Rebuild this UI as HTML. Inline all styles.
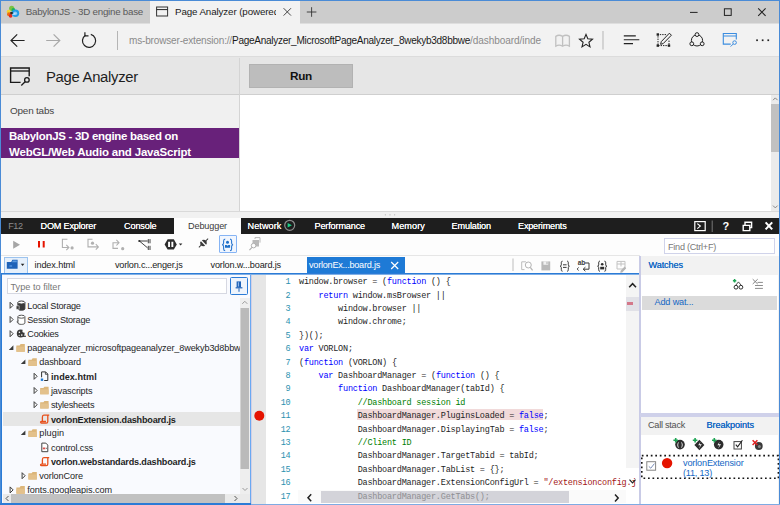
<!DOCTYPE html>
<html><head><meta charset="utf-8"><title>Page Analyzer</title>
<style>
html,body{margin:0;padding:0}
body{width:780px;height:505px;overflow:hidden;position:relative;background:#f2f2f2;font-family:"Liberation Sans",sans-serif;color:#000}
.a{position:absolute;white-space:nowrap}
.t{position:absolute;white-space:pre;line-height:1.15}
svg{position:absolute;overflow:visible}
.hl{background:none}
/* browser chrome */
#tabstrip{left:0;top:0;width:780px;height:23px;background:#cccccc;border-bottom:1px solid #dedede}
#acttab{left:150px;top:1px;width:149.500px;height:24px;background:#f2f2f2}
#navbar{left:0;top:24px;width:780px;height:33px;background:#f2f2f2}
#navline{left:0;top:56.400px;width:780px;height:1px;background:#dcdcdc}
#winl{left:0;top:0;width:1px;height:505px;background:#4a8bd6}
#wint{left:0;top:0;width:780px;height:1px;background:#4a8bd6}
#winr{left:779px;top:0;width:1px;height:505px;background:#4a8bd6}
#winb{left:0;top:504px;width:780px;height:1px;background:#7eabe3}
#lpb{left:0;top:503px;width:251px;height:2px;background:#2b7bd6}
/* page */
#page{left:1px;top:58px;width:778px;height:154px;background:#fff}
#phead{left:1px;top:57.400px;width:778px;height:36.600px;background:#e6e6e6}
#pheadline{left:1px;top:94px;width:778px;height:1px;background:#cfcfcf}
#side{left:1px;top:95px;width:238px;height:116px;background:#f0f0f0}
#sideline{left:239px;top:58px;width:1px;height:153px;background:#d4d4d4}
#run{left:249px;top:64px;width:104px;height:24px;background:#bdbdbd;box-sizing:border-box;border:1px solid #b2b2b2}
#purple{left:1px;top:127.700px;width:238px;height:30.500px;background:#68217a}
#pscroll{left:770.500px;top:94.500px;width:8.500px;height:117px;background:#ebebeb}
#pthumb{left:770.500px;top:103.800px;width:8.500px;height:47.800px;background:#c1c1c1}
#pbot{left:1px;top:211px;width:778px;height:1px;background:#d9d9d9}
/* devtools */
#splitter{left:1px;top:212px;width:778px;height:6px;background:#f1f1f1}
#f12bar{left:1px;top:217.700px;width:778px;height:16.300px;background:#1e1e1e}
#dbgtab{left:174px;top:218px;width:67px;height:17px;background:#fdfdfd}
#dtool{left:1px;top:234px;width:778px;height:22px;background:#fdfdfd}
#ftabs{left:1px;top:256px;width:639px;height:18px;background:#fdfdfd}
#ftline{left:1px;top:255px;width:639px;height:1px;background:#e6e6e6}
#facttab{left:307px;top:257px;width:98px;height:17px;background:#1e7ad6}
#fblue{left:1px;top:273px;width:638px;height:1px;background:#2b7bd6;border-bottom:1px solid #7fafe6}
#leftp{left:1px;top:275px;width:250px;height:229px;background:#f9fafe}
#code{left:251px;top:275px;width:389px;height:229px;background:#fff}
#gut{left:251px;top:275px;width:15px;height:229px;background:#e6e6e6}
#rightp{left:641px;top:256px;width:137px;height:248px;background:#fff}
#rsep{left:639.200px;top:256px;width:1.900px;height:248px;background:#c9cbe6}
#whead{left:641px;top:256px;width:138px;height:19px;background:#f2f2f2}
#addw{left:642.300px;top:296px;width:134.700px;height:13.600px;background:#dbdbdb}
#rsplit{left:640px;top:413px;width:139px;height:4px;background:#cfd1ea}
#chead{left:641px;top:417px;width:138px;height:18px;background:#f2f2f2}
#selrow{left:3px;top:412px;width:237px;height:14px;background:#e6e6e6}
#filter{left:7px;top:278px;width:220px;height:16px;box-sizing:border-box;border:1px solid #d6d8e2;background:#fff}
#pin{left:230px;top:277px;width:18px;height:18px;box-sizing:border-box;border:1px solid #2b7bd6;border-radius:1.500px;background:#eef4fc}
#find{left:664px;top:238px;width:111px;height:16px;box-sizing:border-box;border:1px solid #d0d3ea;background:#fff}
#fbtn{left:4px;top:257px;width:24px;height:17px;box-sizing:border-box;border:1px solid #9cc3ee;background:#e6f0fb}
#pbtn{left:219px;top:235px;width:18px;height:18px;box-sizing:border-box;border:1px solid #86b4f4;border-radius:1px;background:#f1f6fe}
#lpl{left:1px;top:274px;width:1.4px;height:230px;background:#2b7bd6}
#lpr{left:250px;top:275px;width:1px;height:229px;background:#6aa9f2;border-right:1px solid #d3d0e4}
#bpbox{left:0;top:0}
</style></head><body>
<div class="a" id="tabstrip"></div>
<div class="a" id="acttab"></div>
<div class="a" id="navbar"></div>
<div class="a" id="navline"></div>
<div class="a" id="page"></div>
<div class="a" id="phead"></div>
<div class="a" id="pheadline"></div>
<div class="a" id="side"></div>
<div class="a" id="sideline"></div>
<div class="a" id="run"></div>
<div class="a" id="purple"></div>
<div class="a" id="pscroll"></div>
<div class="a" id="pthumb"></div>
<div class="a" id="pbot"></div>
<div class="a" id="splitter"></div>
<div class="a" id="f12bar"></div>
<div class="a" id="dbgtab"></div>
<div class="a" id="dtool"></div>
<div class="a" id="ftabs"></div>
<div class="a" id="ftline"></div>
<div class="a" id="facttab"></div>
<div class="a" id="leftp"></div>
<div class="a" id="code"></div>
<div class="a" id="gut"></div>
<div class="a" id="rightp"></div>
<div class="a" id="whead"></div>
<div class="a" id="addw"></div>
<div class="a" id="chead"></div>
<div class="a" id="selrow"></div>
<div class="a" id="filter"></div>
<div class="a" id="pin"></div>
<div class="a" id="find"></div>
<div class="a" id="fbtn"></div>
<div class="a" id="pbtn"></div>
<svg id="bpbox" width="780" height="505" fill="none"><rect x="641.800" y="455.600" width="136.600" height="22.700" stroke="#151515" stroke-width="1.600" stroke-dasharray="1.700 2.800"/></svg>
<div class="a" id="codewrap" style="left:0;top:0;width:641px;height:505px;overflow:hidden;font-family:'Liberation Mono',monospace;font-size:8.5px;letter-spacing:-0.213px;color:#1e1e1e">
<div class="a" style="left:357.400px;top:409.300px;width:186.100px;height:10.700px;background:#f1dada"></div>
<div class="t ln" style="left:285.6px;top:278.1px;color:#2b91af">1</div>
<div class="t cl" style="left:299.0px;top:278.1px">window.browser = (<span style="color:#0000ff">function</span> () {</div>
<div class="t ln" style="left:285.6px;top:291.5px;color:#2b91af">2</div>
<div class="t cl" style="left:299.0px;top:291.5px">    <span style="color:#0000ff">return</span> window.msBrowser ||</div>
<div class="t ln" style="left:285.6px;top:304.9px;color:#2b91af">3</div>
<div class="t cl" style="left:299.0px;top:304.9px">        window.browser ||</div>
<div class="t ln" style="left:285.6px;top:318.3px;color:#2b91af">4</div>
<div class="t cl" style="left:299.0px;top:318.3px">        window.chrome;</div>
<div class="t ln" style="left:285.6px;top:331.7px;color:#2b91af">5</div>
<div class="t cl" style="left:299.0px;top:331.7px">})();</div>
<div class="t ln" style="left:285.6px;top:345.1px;color:#2b91af">6</div>
<div class="t cl" style="left:299.0px;top:345.1px"><span style="color:#0000ff">var</span> VORLON;</div>
<div class="t ln" style="left:285.6px;top:358.5px;color:#2b91af">7</div>
<div class="t cl" style="left:299.0px;top:358.5px">(<span style="color:#0000ff">function</span> (VORLON) {</div>
<div class="t ln" style="left:285.6px;top:371.9px;color:#2b91af">8</div>
<div class="t cl" style="left:299.0px;top:371.9px">    <span style="color:#0000ff">var</span> DashboardManager = (<span style="color:#0000ff">function</span> () {</div>
<div class="t ln" style="left:285.6px;top:385.3px;color:#2b91af">9</div>
<div class="t cl" style="left:299.0px;top:385.3px">        <span style="color:#0000ff">function</span> DashboardManager(tabId) {</div>
<div class="t ln" style="left:280.7px;top:398.7px;color:#2b91af">10</div>
<div class="t cl" style="left:299.0px;top:398.7px">            <span style="color:#008000">//Dashboard session id</span></div>
<div class="t ln" style="left:280.7px;top:412.1px;color:#2b91af">11</div>
<div class="t cl" style="left:299.0px;top:412.1px">            <span class="hl">DashboardManager.PluginsLoaded = </span><span class="hl" style="color:#0000ff">false</span>;</div>
<div class="t ln" style="left:280.7px;top:425.5px;color:#2b91af">12</div>
<div class="t cl" style="left:299.0px;top:425.5px">            DashboardManager.DisplayingTab = <span style="color:#0000ff">false</span>;</div>
<div class="t ln" style="left:280.7px;top:438.9px;color:#2b91af">13</div>
<div class="t cl" style="left:299.0px;top:438.9px">            <span style="color:#008000">//Client ID</span></div>
<div class="t ln" style="left:280.7px;top:452.3px;color:#2b91af">14</div>
<div class="t cl" style="left:299.0px;top:452.3px">            DashboardManager.TargetTabid = tabId;</div>
<div class="t ln" style="left:280.7px;top:465.7px;color:#2b91af">15</div>
<div class="t cl" style="left:299.0px;top:465.7px">            DashboardManager.TabList = {};</div>
<div class="t ln" style="left:280.7px;top:479.1px;color:#2b91af">16</div>
<div class="t cl" style="left:299.0px;top:479.1px">            DashboardManager.ExtensionConfigUrl = <span style="color:#a31515">"/extensionconfig.j</span></div>
<div class="t ln" style="left:280.7px;top:492.5px;color:#2b91af">17</div>
</div>
<div class="t" style="left:25.7px;top:6.4px;font-size:9.77px;font-weight:400;color:#5a5a5a;letter-spacing:-0.249px;">BabylonJS - 3D engine base</div>
<div class="t" style="left:175.0px;top:6.4px;font-size:9.77px;font-weight:400;color:#1a1a1a;letter-spacing:-0.109px;width:100.5px;overflow:hidden;">Page Analyzer (powered</div>
<div class="t" style="left:129.0px;top:35.2px;font-size:10.04px;font-weight:400;color:#8a8a8a;letter-spacing:-0.176px;">ms-browser-extension://</div>
<div class="t" style="left:232.0px;top:35.2px;font-size:10.04px;font-weight:400;color:#1a1a1a;letter-spacing:-0.281px;">PageAnalyzer_MicrosoftPageAnalyzer_8wekyb3d8bbwe</div>
<div class="t" style="left:470.0px;top:35.2px;font-size:10.04px;font-weight:400;color:#8a8a8a;letter-spacing:-0.064px;">/dashboard/inde</div>
<div class="t" style="left:46.0px;top:69.1px;font-size:14.84px;font-weight:400;color:#1e1e1e;letter-spacing:-0.279px;">Page Analyzer</div>
<div class="t" style="left:290.0px;top:69.2px;font-size:11.77px;font-weight:700;color:#111;letter-spacing:-0.292px;">Run</div>
<div class="t" style="left:10.0px;top:105.3px;font-size:9.92px;font-weight:400;color:#444;letter-spacing:-0.191px;">Open tabs</div>
<div class="t" style="left:9.0px;top:129.9px;font-size:11.47px;font-weight:700;color:#fff;letter-spacing:-0.294px;">BabylonJS - 3D engine based on</div>
<div class="t" style="left:9.0px;top:146.0px;font-size:11.47px;font-weight:700;color:#fff;letter-spacing:-0.171px;">WebGL/Web Audio and JavaScript</div>
<div class="t" style="left:8.2px;top:220.7px;font-size:9.14px;font-weight:400;color:#8c8c8c;letter-spacing:-0.445px;">F12</div>
<div class="t" style="left:40.5px;top:220.7px;font-size:9.14px;font-weight:400;color:#fff;letter-spacing:-0.193px;text-shadow:0 0 0.4px #fff;">DOM Explorer</div>
<div class="t" style="left:124.0px;top:220.7px;font-size:9.14px;font-weight:400;color:#fff;letter-spacing:-0.141px;text-shadow:0 0 0.4px #fff;">Console</div>
<div class="t" style="left:188.0px;top:220.7px;font-size:9.14px;font-weight:400;color:#3a3a3a;letter-spacing:-0.135px;">Debugger</div>
<div class="t" style="left:247.5px;top:220.7px;font-size:9.14px;font-weight:400;color:#fff;letter-spacing:0.076px;text-shadow:0 0 0.4px #fff;">Network</div>
<div class="t" style="left:314.5px;top:220.7px;font-size:9.14px;font-weight:400;color:#fff;letter-spacing:-0.159px;text-shadow:0 0 0.4px #fff;">Performance</div>
<div class="t" style="left:391.5px;top:220.7px;font-size:9.14px;font-weight:400;color:#fff;letter-spacing:0.089px;text-shadow:0 0 0.4px #fff;">Memory</div>
<div class="t" style="left:451.5px;top:220.7px;font-size:9.14px;font-weight:400;color:#fff;letter-spacing:-0.120px;text-shadow:0 0 0.4px #fff;">Emulation</div>
<div class="t" style="left:518.0px;top:220.7px;font-size:9.14px;font-weight:400;color:#fff;letter-spacing:-0.202px;text-shadow:0 0 0.4px #fff;">Experiments</div>
<div class="t" style="left:34.5px;top:260.2px;font-size:9.14px;font-weight:400;color:#222;letter-spacing:-0.109px;">index.html</div>
<div class="t" style="left:115.0px;top:260.2px;font-size:9.14px;font-weight:400;color:#222;letter-spacing:-0.211px;">vorlon.c...enger.js</div>
<div class="t" style="left:210.5px;top:260.2px;font-size:9.14px;font-weight:400;color:#222;letter-spacing:-0.160px;">vorlon.w...board.js</div>
<div class="t" style="left:309.0px;top:260.2px;font-size:9.14px;font-weight:400;color:#fff;letter-spacing:-0.241px;">vorlonEx...board.js</div>
<div class="t" style="left:10.5px;top:281.7px;font-size:9.14px;font-weight:400;color:#777;letter-spacing:0.021px;">Type to filter</div>
<div class="t" style="left:668.0px;top:241.7px;font-size:9.14px;font-weight:400;color:#777;letter-spacing:-0.267px;">Find (Ctrl+F)</div>
<div class="t" style="left:648.5px;top:260.2px;font-size:9.14px;font-weight:400;color:#1467c4;letter-spacing:-0.096px;text-shadow:0 0 0.4px #1467c4;">Watches</div>
<div class="t" style="left:654.5px;top:296.7px;font-size:9.14px;font-weight:400;color:#1467c4;letter-spacing:-0.158px;">Add wat...</div>
<div class="t" style="left:648.0px;top:419.7px;font-size:9.14px;font-weight:400;color:#505050;letter-spacing:-0.256px;">Call stack</div>
<div class="t" style="left:706.5px;top:419.7px;font-size:9.14px;font-weight:400;color:#1467c4;letter-spacing:-0.062px;text-shadow:0 0 0.4px #1467c4;">Breakpoints</div>
<div class="t" style="left:683.0px;top:457.7px;font-size:9.14px;font-weight:400;color:#1467c4;letter-spacing:-0.159px;">vorlonExtensior</div>
<div class="t" style="left:683.0px;top:468.2px;font-size:9.14px;font-weight:400;color:#1467c4;letter-spacing:-0.223px;">(11, 13)</div>
<div class="t" style="left:27.3px;top:300.5px;font-size:9.14px;font-weight:400;color:#1e1e1e;letter-spacing:-0.224px;">Local Storage</div>
<div class="t" style="left:27.3px;top:314.7px;font-size:9.14px;font-weight:400;color:#1e1e1e;letter-spacing:-0.285px;">Session Storage</div>
<div class="t" style="left:27.3px;top:328.9px;font-size:9.14px;font-weight:400;color:#1e1e1e;letter-spacing:-0.224px;">Cookies</div>
<div class="t" style="left:27.3px;top:343.1px;font-size:9.14px;font-weight:400;color:#1e1e1e;letter-spacing:-0.136px;">pageanalyzer_microsoftpageanalyzer_8wekyb3d8bbwe</div>
<div class="t" style="left:39.3px;top:357.3px;font-size:9.14px;font-weight:400;color:#1e1e1e;letter-spacing:-0.160px;">dashboard</div>
<div class="t" style="left:51.0px;top:372.0px;font-size:9.09px;font-weight:700;color:#1e1e1e;letter-spacing:0.029px;">index.html</div>
<div class="t" style="left:51.0px;top:385.7px;font-size:9.14px;font-weight:400;color:#1e1e1e;letter-spacing:-0.164px;">javascripts</div>
<div class="t" style="left:51.0px;top:399.9px;font-size:9.14px;font-weight:400;color:#1e1e1e;letter-spacing:-0.214px;">stylesheets</div>
<div class="t" style="left:51.0px;top:414.6px;font-size:9.09px;font-weight:700;color:#1e1e1e;letter-spacing:-0.195px;">vorlonExtension.dashboard.js</div>
<div class="t" style="left:39.3px;top:428.3px;font-size:9.14px;font-weight:400;color:#1e1e1e;letter-spacing:0.107px;">plugin</div>
<div class="t" style="left:51.0px;top:442.5px;font-size:9.14px;font-weight:400;color:#1e1e1e;letter-spacing:-0.148px;">control.css</div>
<div class="t" style="left:51.0px;top:457.2px;font-size:9.09px;font-weight:700;color:#1e1e1e;letter-spacing:-0.176px;">vorlon.webstandards.dashboard.js</div>
<div class="t" style="left:39.3px;top:470.9px;font-size:9.14px;font-weight:400;color:#1e1e1e;letter-spacing:-0.094px;">vorlonCore</div>
<div class="t" style="left:27.3px;top:485.1px;font-size:9.14px;font-weight:400;color:#1e1e1e;letter-spacing:-0.077px;">fonts.googleapis.com</div>
<!-- left panel vertical scrollbar -->
<div class="a" style="left:240px;top:298px;width:10px;height:196px;background:#eeeeee"></div>
<div class="a" style="left:240px;top:308px;width:8px;height:160.500px;background:#bababa;border-left:1px solid #d4d4d4"></div>
<svg style="left:240px;top:296px" width="10" height="195"><path d="M2.300 7.800 L4.800 5.300 L7.300 7.800" fill="none" stroke="#9a9a9a" stroke-width="1"/><path d="M2.500 192 L5 194.500 L7.500 192" fill="none" stroke="#9a9a9a" stroke-width="1"/></svg>
<!-- left panel horizontal scrollbar -->
<div class="a" style="left:3px;top:494px;width:247px;height:10px;background:#eaeaea"></div>
<div class="a" style="left:11px;top:494.300px;width:214px;height:8.300px;background:#c1c1c1"></div>
<svg style="left:3px;top:492px" width="247" height="12"><path d="M5.500 4 L3 6.500 L5.500 9" fill="none" stroke="#555" stroke-width="1"/><path d="M231.500 4 L234 6.500 L231.500 9" fill="none" stroke="#555" stroke-width="1"/></svg>
<!-- code vertical scrollbar -->
<div class="a" style="left:626.200px;top:275px;width:12.800px;height:193.300px;background:#f4f4f4"></div>
<div class="a" style="left:626.200px;top:297.200px;width:12.800px;height:14px;background:#e1e1e7"></div>
<div class="a" style="left:627.200px;top:301.500px;width:5.600px;height:3.900px;background:#d4788a"></div>
<svg style="left:626px;top:275px" width="13" height="230"><path d="M3.200 12.300 L6.600 8.700 L10 12.300" fill="none" stroke="#222" stroke-width="1.500"/><path d="M3.500 204.600 L6.500 207.800 L9.500 204.600" fill="none" stroke="#222" stroke-width="1.200"/></svg>
<!-- code horizontal scrollbar -->
<div class="a" style="left:298px;top:490px;width:328px;height:13px;background:#fafafa"></div>
<div class="a" style="left:321px;top:491px;width:248px;height:12px;background:#d3d3d9"></div>
<svg style="left:298px;top:490px" width="328" height="13"><path d="M13.200 4.300 L10 7.800 L13.200 11.300" fill="none" stroke="#222" stroke-width="1.500"/><path d="M317 4.400 L320.200 7.900 L317 11.400" fill="none" stroke="#222" stroke-width="1.500"/></svg>
<!-- page scrollbar arrows -->
<svg style="left:770.500px;top:95px" width="9" height="116"><path d="M2 5.200 L4.300 2.900 L6.600 5.200" fill="none" stroke="#888" stroke-width="1"/><path d="M2 110.600 L4.300 112.900 L6.600 110.600" fill="none" stroke="#888" stroke-width="1"/></svg>

<div class="t cl" style="left:299.0px;top:492.5px;font-family:'Liberation Mono',monospace;font-size:8.5px;letter-spacing:-0.213px;color:#8e8e92">            DashboardManager.GetTabs();</div>
<div class="a" id="fblue"></div>
<div class="a" id="rsep"></div>
<div class="a" id="rsplit"></div>
<div class="a" id="lpl"></div>
<div class="a" id="lpr"></div>
<!-- ===== browser chrome icons ===== -->
<svg style="left:0;top:0" width="780" height="58" fill="none">
 <!-- favicon -->
 <circle cx="11.700" cy="8.300" r="2.600" fill="#7cc243"/>
 <circle cx="8.600" cy="11.700" r="1.900" fill="#f2d32c"/>
 <circle cx="9" cy="14.300" r="2" fill="#f06a10"/>
 <circle cx="10.600" cy="15.900" r="1.800" fill="#e62a1e"/>
 <circle cx="13.400" cy="9.900" r="1.900" fill="#19b35a"/>
 <circle cx="15.500" cy="13.300" r="3.700" fill="#1e9ce8"/>
 <circle cx="15.200" cy="13.300" r="1.900" fill="#8ecbf8"/>
 <circle cx="11.500" cy="13.100" r="1.400" fill="#262626"/>
 <path d="M12.400 14.400c1.200.6 2.400-.2 2.800-1.400" stroke="#e8f2fc" stroke-width=".8"/>
 <!-- tab 2 page icon -->
 <rect x="156.600" y="7" width="11" height="9" stroke="#333" stroke-width="1"/>
 <path d="M156.6 9.6h11" stroke="#222" stroke-width="1"/>
 <!-- tab close, plus -->
 <path d="M283.600 8.200l7.400 7.400M291 8.200l-7.400 7.400" stroke="#333" stroke-width=".9"/>
 <path d="M306.800 12h9.600M311.600 7.200v9.600" stroke="#333" stroke-width=".9"/>
 <!-- window controls -->
 <path d="M690 12.4h7.6" stroke="#222" stroke-width="1"/>
 <rect x="724.4" y="8.8" width="6.8" height="6.6" stroke="#222" stroke-width="1"/>
 <path d="M758.2 8.4l7.4 7.4M765.6 8.4l-7.4 7.4" stroke="#222" stroke-width="1.1"/>
 <!-- back / forward / refresh -->
 <path d="M24.6 40.5H11M17.2 34.3L11 40.5l6.2 6.2" stroke="#222" stroke-width="1.2"/>
 <path d="M46.2 40.5h13.6M53.6 34.3l6.2 6.2-6.2 6.2" stroke="#a8a8a8" stroke-width="1.2"/>
 <path d="M85.500 35.200A6.600 6.600 0 1 0 90.800 34.400" stroke="#222" stroke-width="1.200"/>
 <path d="M84.900 32.200v3.600h3.600" stroke="#222" stroke-width="1.200"/>
 <path d="M117.5 31v19" stroke="#b5b5b5" stroke-width="1"/>
 <!-- reading view book -->
 <path d="M562.600 36.400c-2-1.300-5-1.300-6.800 0v9.800c1.800-1.100 4.800-1.100 6.800 0c2-1.100 5-1.100 6.800 0v-9.800c-1.800-1.300-4.800-1.300-6.800 0zM562.600 36.400v9.800" stroke="#c0c0c0" stroke-width="1.300"/>
 <!-- star -->
 <path d="M586 34.400l1.800 4.400 4.700.4-3.600 3.100 1.100 4.600-4-2.500-4 2.500 1.100-4.600-3.600-3.100 4.700-.4z" stroke="#222" stroke-width="1.100" stroke-linejoin="miter"/>
 <path d="M603 31v18.5" stroke="#b5b5b5" stroke-width="1"/>
 <!-- hub -->
 <path d="M623.800 35.900h12M623.800 39.800h15.500M623.800 43.600h9.200" stroke="#222" stroke-width="1.100"/>
 <!-- web note -->
 <path d="M666 34.6h-8v11h11v-6" stroke="#222" stroke-width="1" stroke-dasharray="1.4 1"/>
 <rect x="656.6" y="33.3" width="2.4" height="2.4" fill="#222"/><rect x="656.6" y="44.4" width="2.4" height="2.4" fill="#222"/><rect x="667.8" y="44.4" width="2.4" height="2.4" fill="#222"/>
 <path d="M669.4 33.2l2 2-8.2 8.4-2.6.7.7-2.7z" stroke="#222" stroke-width="1"/>
 <!-- share -->
 <circle cx="697" cy="40.4" r="5.6" stroke="#222" stroke-width="1"/>
 <circle cx="697" cy="34.6" r="1.9" fill="#f2f2f2" stroke="#222" stroke-width="1"/>
 <circle cx="691.8" cy="43.8" r="1.9" fill="#f2f2f2" stroke="#222" stroke-width="1"/>
 <circle cx="702.2" cy="43.8" r="1.9" fill="#f2f2f2" stroke="#222" stroke-width="1"/>
 <!-- page analyzer (blue) -->
 <path d="M736.3 39.5v-6h-13v10.6h7.4" stroke="#3b8de0" stroke-width="1.1"/>
 <path d="M723.3 36h13" stroke="#3b8de0" stroke-width="1"/>
 <circle cx="734.6" cy="42.6" r="1.8" stroke="#3b8de0" stroke-width="1"/>
 <path d="M733.2 44l-2.6 2.6" stroke="#3b8de0" stroke-width="1"/>
 <!-- dots -->
 <rect x="756.2" y="39.4" width="1.7" height="1.7" fill="#222"/><rect x="761.8" y="39.4" width="1.7" height="1.7" fill="#222"/><rect x="767.4" y="39.4" width="1.7" height="1.7" fill="#222"/>
</svg>
<!-- page analyzer header icon -->
<svg style="left:0;top:58px" width="60" height="36" fill="none">
 <path d="M29.2 18.2V10H10.6v14.4h10" stroke="#1a1a1a" stroke-width="1.4"/>
 <path d="M10.6 13h18.6" stroke="#1a1a1a" stroke-width="1.3"/>
 <circle cx="26.9" cy="21.9" r="2.3" stroke="#1a1a1a" stroke-width="1.3"/>
 <path d="M25.1 23.7l-3.8 3.8" stroke="#1a1a1a" stroke-width="1.3"/>
</svg>
<!-- splitter grip --><svg style="left:383px;top:213px" width="14" height="4"><rect x="1.800" y="1.200" width="1.200" height="1.200" fill="#c4c4c4"/><rect x="6.400" y="1.200" width="1.200" height="1.200" fill="#c4c4c4"/><rect x="11" y="1.200" width="1.200" height="1.200" fill="#c4c4c4"/></svg>
<!-- ===== F12 bar icons ===== -->
<svg style="left:0;top:218px" width="780" height="16" fill="none">
 <circle cx="289.700" cy="7.300" r="5" stroke="#8e8e8e" stroke-width="1.200"/>
 <path d="M287.600 5.100l4.300 2.200-4.300 2.200z" fill="#1fce86"/>
 <rect x="694.8" y="3.6" width="10.4" height="9" stroke="#fff" stroke-width="1.2"/>
 <path d="M697.3 5.6l3 2.5-3 2.5" stroke="#fff" stroke-width="1.2"/>
 <path d="M712.2 2.5v11.5" stroke="#777" stroke-width="1"/>
 <path d="M743.2 7.4v5.2h6.6V7.4zM745 7.2V4.2h6.6v5.4h-1.6" stroke="#fff" stroke-width="1.4"/>
 <path d="M765.6 4.4l6.6 7M772.2 4.4l-6.6 7" stroke="#fff" stroke-width="2.1"/>
</svg>
<div class="t" style="left:722.6px;top:220.2px;font-size:11px;font-weight:700;color:#fff">?</div>
<!-- ===== debugger toolbar ===== -->
<svg style="left:0;top:234px" width="300" height="22" fill="none">
 <path d="M13.2 6.8v8l6.8-4z" fill="#a6a6a6"/>
 <path d="M38 7h2v6.4h-2zM42.7 7h2v6.4h-2z" fill="#e51400"/>
 <!-- step into -->
 <path d="M67.400 5.200h-5v8.300h6M66.300 10.800l2.600 2.700-2.600 2.700" stroke="#b0b0b0" stroke-width="1.100"/>
 <circle cx="72.100" cy="13.900" r="1.600" fill="#b0b0b0"/>
 <!-- step over -->
 <path d="M92.500 5.200h-4.500v7.700h10M95.800 10.100l2.600 2.800-2.600 2.800" stroke="#b0b0b0" stroke-width="1.100"/>
 <circle cx="92.500" cy="9.200" r="1.600" fill="#b0b0b0"/>
 <!-- step out -->
 <path d="M118 14.400h-5V8.700h5.600M116.400 5.900l2.600 2.800-2.600 2.800" stroke="#b0b0b0" stroke-width="1.100"/>
 <circle cx="122.700" cy="14.700" r="1.600" fill="#b0b0b0"/>
 <!-- worker -->
 <path d="M139.300 7h8.400M139.600 7.200l8 6.700" stroke="#2d2d2d" stroke-width=".9"/>
 <circle cx="139.300" cy="7" r="1.100" fill="#2d2d2d"/>
 <path d="M148.300 5.100v4.200M150 5.100v4.200M148.300 11.800v4.200M150 11.800v4.200" stroke="#2d2d2d" stroke-width=".9"/>
 <!-- exceptions -->
 <path d="M167.6 5.2h6.2l3 5.2-3 5.2h-6.2l-3-5.2z" fill="#2d2d2d"/>
 <path d="M168.100 7.700h1.900v5.400h-1.900zM171.400 7.700h1.900v5.400h-1.900z" fill="#fff"/>
 <path d="M178.8 9.4h3.6l-1.8 2z" fill="#2d2d2d"/>
 <!-- plug -->
 <g transform="translate(203.500 9) rotate(-43) scale(.88)">
  <path d="M-7.200 0h3.600M3.600 0h3.600" stroke="#3a3a3a" stroke-width="1.100"/>
  <path d="M-.7-3.500v7l-1.500-.4-1.600-2v-2.200l1.600-2z" fill="#3a3a3a"/>
  <path d="M.7-3.500v7l1.500-.4 1.600-2v-2.200l-1.600-2z" fill="#3a3a3a"/>
 </g>
 <!-- pretty print person -->
 <path d="M225.200 5.100c-1.600 0-1.600.500-1.600 2v2c0 1-.500 1.500-1.400 1.700.900.200 1.400.700 1.400 1.700v2.200c0 1.500 0 2 1.600 2M230 5.100c1.600 0 1.600.500 1.600 2v2c0 1 .500 1.500 1.400 1.700-.900.200-1.400.700-1.400 1.700v2.200c0 1.500 0 2-1.600 2" stroke="#2a77d0" stroke-width="1.100"/>
 <circle cx="227.500" cy="8.200" r="1.500" fill="#1e6fc8"/>
 <path d="M225 13.800v-2.900h1.600l.9.900.9-.9h1.700v2.900z" fill="#1e6fc8"/>
 <!-- gray find icon -->
 <path d="M252.500 6h6.500v6.500h-6.500z" fill="#b9b9b9"/>
 <path d="M255 5v-1.400h5v5" stroke="#b9b9b9" stroke-width="1"/>
 <circle cx="253.600" cy="11.600" r="2.300" fill="#fdfdfd" stroke="#b0b0b0" stroke-width="1"/>
 <path d="M252 13.400l-2.600 2.800" stroke="#b0b0b0" stroke-width="1.200"/>
</svg>
<!-- ===== file tab row ===== -->
<svg style="left:0;top:256px" width="640" height="18" fill="none">
 <path d="M6.800 6h4.400l1.200-2.200h5.200v9H6.800z" fill="#1e62b8"/>
 <path d="M12 6.200l.900-1.600h3.900v1.600z" fill="#5d9be0"/>
 <path d="M9.500 9.200h2.600v1.600H9.500z" fill="#4d8fdc"/>
 <path d="M20.800 7.700h3.600l-1.800 2.200z" fill="#222"/>
 <path d="M391.200 6l7 7M398.200 6l-7 7" stroke="#fff" stroke-width="1.200"/>
 <path d="M513 2.500v12.500" stroke="#bdbdbd" stroke-width="1"/>
<g transform="translate(0,.8)">
 <!-- find in files (gray) -->
 <path d="M524.500 12.800h-2.800V5h4l1.600 1.600" stroke="#bdbdbd" stroke-width="1"/>
 <circle cx="528.300" cy="8.200" r="3" fill="#fdfdfd" stroke="#b5b5b5" stroke-width="1"/>
 <path d="M530.300 10.600l2.300 3" stroke="#b5b5b5" stroke-width="1.300"/>
 <!-- save (gray) -->
 <path d="M541.400 4.600h8.800v9h-8.800z" fill="#b9b9b9"/>
 <path d="M543.400 4.600h4.800v3.400h-4.800z" fill="#f0f0f0"/><path d="M546.400 5h1.200v2.400h-1.200z" fill="#b9b9b9"/>
 <!-- {=} -->
 <path d="M562.600 4.400c-1.300 0-1.300.600-1.300 1.900v1.700c0 .900-.400 1.200-1.100 1.400.700.200 1.100.500 1.100 1.400v1.700c0 1.300 0 1.900 1.300 1.900M567 4.400c1.300 0 1.300.600 1.300 1.900v1.700c0 .900.400 1.200 1.100 1.400-.700.200-1.100.500-1.100 1.400v1.700c0 1.300 0 1.900-1.300 1.900" stroke="#3a3a3a" stroke-width="1"/>
 <path d="M563 8h3.600M563 10.600h3.600" stroke="#3a3a3a" stroke-width="1"/>
 <!-- word wrap -->
 <path d="M585 6.200h4v6.200h-5.600M585.400 10.400l-2.200 2 2.200 2" stroke="#3a3a3a" stroke-width="1"/>
 <path d="M578.600 10.600l-1.400 1.600 1.400 1.600" stroke="#3a3a3a" stroke-width=".9"/>
 <!-- {person} -->
 <path d="M600 4.400c-1.300 0-1.300.600-1.300 1.900v1.700c0 .900-.400 1.200-1.100 1.400.700.200 1.100.500 1.100 1.400v1.700c0 1.300 0 1.900 1.300 1.900M604.400 4.400c1.300 0 1.300.600 1.300 1.900v1.700c0 .900.400 1.200 1.100 1.400-.700.200-1.100.500-1.100 1.400v1.700c0 1.300 0 1.900-1.300 1.900" stroke="#2d2d2d" stroke-width="1"/>
 <circle cx="602.200" cy="7.400" r="1.300" fill="#2d2d2d"/><path d="M600.200 12.600v-2.600h4v2.600z" fill="#2d2d2d"/>
 <!-- gray list icon -->
 <path d="M617 4.600h8v7.600h-8z" stroke="#c2c2c2" stroke-width="1"/>
 <path d="M617 7.200h8M621 4.600v5" stroke="#c2c2c2" stroke-width="1"/>
 <path d="M620.600 14l4-4.200 1.600 1.600-4 4.200-2 .4z" fill="#b5b5b5"/>
</g>
</svg>
<div class="t" style="left:577.800px;top:259.400px;font-size:6.500px;font-weight:700;color:#3a3a3a;letter-spacing:-.2px">ab</div>
<!-- pin -->
<svg style="left:230px;top:277px" width="18" height="18" fill="none">
 <path d="M6.600 4.400h4.400v6H6.600z" fill="#1e62b8"/><path d="M7.900 5.200h1v4.400h-1z" fill="#9cc0ee"/><path d="M5.600 10.800h6.800" stroke="#1e62b8" stroke-width="1.200"/><path d="M9 11.400v3.400" stroke="#1e62b8" stroke-width="1"/>
</svg>
<!-- ===== tree icons ===== -->
<svg style="left:0;top:0" width="252" height="505" fill="none">
<path d="M10.1 302.3l3 3-3 3z" stroke="#3c3c3c" stroke-width="1" fill="#fff"/>
<path d="M17.9 302.7v6c0 2 7 2 7 0v-6" fill="#3a3a3a" stroke="#3a3a3a" stroke-width="1"/>
<ellipse cx="21.4" cy="302.5" rx="3.500" ry="1.500" fill="#fff" stroke="#3a3a3a" stroke-width="1"/>
<path d="M16.2 305.8h3v3.500h-3z" fill="#3a3a3a" stroke="#fff" stroke-width=".5"/>
<path d="M10.1 316.5l3 3-3 3z" stroke="#3c3c3c" stroke-width="1" fill="#fff"/>
<path d="M17.9 316.9v6c0 2 7 2 7 0v-6" fill="#fff" stroke="#555" stroke-width="1"/>
<ellipse cx="21.4" cy="316.7" rx="3.500" ry="1.500" fill="#fff" stroke="#555" stroke-width="1"/>
<path d="M18.4 320.5l-1.600 1.300 1.600 1.300" stroke="#555" stroke-width=".8"/>
<path d="M10.1 330.7l3 3-3 3z" stroke="#3c3c3c" stroke-width="1" fill="#fff"/>
<circle cx="20.7" cy="333.5" r="3.900" fill="#3a3a3a"/>
<circle cx="24.0" cy="331.1" r="1.700" fill="#fff"/>
<circle cx="19.4" cy="332.3" r=".8" fill="#fff"/><circle cx="21.8" cy="335.1" r=".8" fill="#fff"/><circle cx="19.2" cy="335.3" r=".6" fill="#fff"/>
<path d="M22.9 336.3h3" stroke="#3a3a3a" stroke-width="1.200"/>
<path d="M13.4 345.3v4.600h-4.600z" fill="#3a3a3a"/>
<path d="M16.4 345.5h3.200l1-1.400h4.200v7.600H16.4z" fill="#dcb67a"/>
<path d="M16.4 346.7h8.400v5H16.4z" fill="#e3c18c"/>
<path d="M25.4 359.5v4.600h-4.600z" fill="#3a3a3a"/>
<path d="M28.4 359.7h3.200l1-1.400h4.200v7.600H28.4z" fill="#dcb67a"/>
<path d="M28.4 360.9h8.400v5H28.4z" fill="#e3c18c"/>
<path d="M34.1 373.3l3 3-3 3z" stroke="#3c3c3c" stroke-width="1" fill="#fff"/>
<path d="M41.6 377.3v-5.400h4l2.200 2.200v6.400h-3.600" stroke="#333" stroke-width="1"/>
<path d="M45.4 371.9v2.400h2.400" stroke="#333" stroke-width=".8"/>
<rect x="40.8" y="378.5" width="2.400" height="2.400" fill="#1e7ad6"/>
<path d="M34.1 387.5l3 3-3 3z" stroke="#3c3c3c" stroke-width="1" fill="#fff"/>
<path d="M40.2 388.1h3.200l1-1.400h4.200v7.600H40.2z" fill="#dcb67a"/>
<path d="M40.2 389.3h8.400v5H40.2z" fill="#e3c18c"/>
<path d="M34.1 401.7l3 3-3 3z" stroke="#3c3c3c" stroke-width="1" fill="#fff"/>
<path d="M40.2 402.3h3.200l1-1.400h4.200v7.600H40.2z" fill="#dcb67a"/>
<path d="M40.2 403.5h8.400v5H40.2z" fill="#e3c18c"/>
<path d="M49.2 415.1h-5.400c-1.400 0-1.400 1.600-1.400 2v4.800M47.8 415.3v6.200c0 1.400-1 1.600-1.600 1.600H41.4c-1 0-1.200-1.600 0-1.600h4.600" stroke="#e8501c" stroke-width="1.300"/>
<path d="M25.4 430.5v4.600h-4.600z" fill="#3a3a3a"/>
<path d="M28.4 430.7h3.200l1-1.400h4.200v7.600H28.4z" fill="#dcb67a"/>
<path d="M28.4 431.9h8.400v5H28.4z" fill="#e3c18c"/>
<path d="M41.8 443.1h4l2 2v6.600h-6z" stroke="#444" stroke-width="1" fill="#fff"/>
<path d="M42.8 447.5h2.600v1.800h-2.600z" fill="#d9534f"/>
<path d="M46.0 448.3h1" stroke="#444" stroke-width=".8"/>
<path d="M49.2 457.7h-5.400c-1.400 0-1.400 1.600-1.400 2v4.800M47.8 457.9v6.200c0 1.400-1 1.600-1.600 1.600H41.4c-1 0-1.200-1.600 0-1.600h4.600" stroke="#e8501c" stroke-width="1.300"/>
<path d="M22.1 472.7l3 3-3 3z" stroke="#3c3c3c" stroke-width="1" fill="#fff"/>
<path d="M28.4 473.3h3.200l1-1.400h4.200v7.600H28.4z" fill="#dcb67a"/>
<path d="M28.4 474.5h8.400v5H28.4z" fill="#e3c18c"/>
<path d="M10.1 486.9l3 3-3 3z" stroke="#3c3c3c" stroke-width="1" fill="#fff"/>
<path d="M16.4 487.5h3.200l1-1.400h4.200v7.600H16.4z" fill="#dcb67a"/>
<path d="M16.4 488.7h8.400v5H16.4z" fill="#e3c18c"/>
</svg>
<!-- ===== right panel icons ===== -->
<svg style="left:640px;top:256px" width="140" height="249" fill="none">
 <!-- glasses + -->
 <circle cx="96" cy="31.200" r="1.900" stroke="#1a1a1a" stroke-width=".9"/><circle cx="100.900" cy="31.200" r="1.900" stroke="#1a1a1a" stroke-width=".9"/>
 <path d="M95.600 29.400l2.850-3.500 2.850 3.500" stroke="#1a1a1a" stroke-width=".8"/>
 <path d="M92.900 24.800h3.400M94.600 23.100v3.400" stroke="#1fa555" stroke-width="1.500"/>
 <!-- delete all -->
 <path d="M112.700 23.200l5 4.800M117.700 23.200l-5 4.800" stroke="#777" stroke-width=".9"/>
 <path d="M117.500 26.400h5.400M115 29.500h7.900M115 32.400h7.900" stroke="#8c8c8c" stroke-width="1"/>
 <!-- breakpoint toolbar -->
 <circle cx="40" cy="188.600" r="4.800" fill="#2d2d2d"/>
 <path d="M38.800 186.600c-1 0-.8 1-.8 1.600 0 .5-.4.700-.8.800.4.100.8.300.8.800 0 .6-.2 1.600.8 1.600M41.200 186.600c1 0 .8 1 .8 1.600 0 .5.400.700.800.800-.4.100-.8.300-.8.800 0 .6.200 1.600-.8 1.600" stroke="#fff" stroke-width=".8"/>
 <path d="M33.400 184.200h4.600M35.700 181.900v4.600" stroke="#1fa555" stroke-width="1.600"/>
 <path d="M59.400 183.800l5 5.200-5 5.200-5-5.200z" fill="#2d2d2d"/>
 <path d="M60.400 185.800l-2.200 3.400h2.200l-1.400 3 .2 0 2.600-4h-2.200z" fill="#fff"/>
 <path d="M52.800 184.200h4.600M55.100 181.900v4.600" stroke="#1fa555" stroke-width="1.600"/>
 <circle cx="78.700" cy="188.600" r="4.800" fill="#2d2d2d"/>
 <path d="M79.600 185.800l-2.200 3.400h2.200l-1.400 3 .2 0 2.600-4h-2.200z" fill="#fff"/>
 <path d="M72 184.200h4.600M74.300 181.900v4.600" stroke="#1fa555" stroke-width="1.600"/>
 <rect x="94" y="185.600" width="7.400" height="7.400" stroke="#444" stroke-width="1"/>
 <path d="M95.800 188.600l1.800 2.200 4.800-6.600" stroke="#222" stroke-width="1.100"/>
 <circle cx="118.800" cy="190" r="3.900" fill="#3a3a3a"/><circle cx="119.400" cy="190.400" r="1.500" fill="#888"/>
 <path d="M112.600 184.200l4.800 4.800M117.400 184.200l-4.800 4.800" stroke="#e02020" stroke-width="1.500"/>
 <!-- bp row -->
 <rect x="6.800" y="205.700" width="8.800" height="8.500" stroke="#858585" stroke-width="1" fill="#fff"/>
 <path d="M8.800 210.400l2 1.800 3.600-4.600" stroke="#6a80b0" stroke-width=".9"/>
 <circle cx="27.100" cy="207.100" r="5.200" fill="#e51400"/>
</svg>
<!-- gutter breakpoint -->
<svg style="left:251px;top:405px" width="20" height="20"><circle cx="8.300" cy="10.700" r="5" fill="#e51400"/></svg>

<div class="a" id="winl"></div><div class="a" id="wint"></div><div class="a" id="winr"></div><div class="a" id="winb"></div><div class="a" id="lpb"></div>
</body></html>
